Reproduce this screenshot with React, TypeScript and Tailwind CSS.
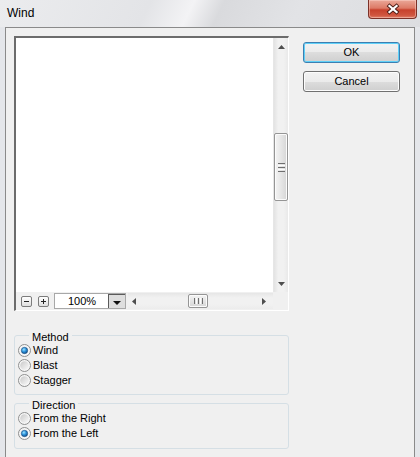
import React from "react";

function Radio({ checked }: { checked: boolean }) {
  return (
    <svg width="13" height="13" viewBox="0 0 13 13" className="shrink-0">
      <defs>
        <linearGradient id="radio-well" x1="0" y1="0" x2="1" y2="1">
          <stop offset="0" stopColor="#c9c9c9" />
          <stop offset="1" stopColor="#fafafa" />
        </linearGradient>
        <radialGradient id="radio-dot" cx="0.4" cy="0.35" r="0.75">
          <stop offset="0" stopColor="#9fe6ff" />
          <stop offset="0.45" stopColor="#2d93dc" />
          <stop offset="1" stopColor="#0b3d73" />
        </radialGradient>
      </defs>
      <circle cx="6.5" cy="6.5" r="6" fill="#f6f6f6" stroke="#8e8f8f" strokeWidth="1" />
      <circle cx="6.5" cy="6.5" r="4.3" fill="url(#radio-well)" />
      {checked && (
        <>
          <circle cx="6.5" cy="6.5" r="4.3" fill="#ffffff" />
          <circle cx="6.5" cy="6.5" r="3.2" fill="url(#radio-dot)" stroke="#1c4e7e" strokeWidth="0.6" />
        </>
      )}
    </svg>
  );
}

function RadioRow({ label, checked }: { label: string; checked: boolean }) {
  return (
    <div className="flex h-[15px] items-center gap-[2px]">
      <Radio checked={checked} />
      <span className="leading-[15px]">{label}</span>
    </div>
  );
}

function Arrow({ dir }: { dir: "up" | "down" | "left" | "right" }) {
  const pts: Record<string, string> = {
    up: "0,4 3.5,0 7,4",
    down: "0,0 7,0 3.5,4",
    left: "4,0 4,7 0,3.5",
    right: "0,0 4,3.5 0,7",
  };
  const vertical = dir === "up" || dir === "down";
  return (
    <svg
      width={vertical ? 7 : 4}
      height={vertical ? 4 : 7}
      viewBox={vertical ? "0 0 7 4" : "0 0 4 7"}
    >
      <polygon points={pts[dir]} fill="#4e4e4e" />
    </svg>
  );
}

function SmallButton({ sign }: { sign: "-" | "+" }) {
  return (
    <div className="flex h-[11px] w-[11px] items-center justify-center rounded-[2px] border border-[#7c7c7c] bg-[linear-gradient(#ffffff,#dedede)]">
      <svg width="7" height="7" viewBox="0 0 7 7">
        <rect x="1" y="3" width="5" height="1" fill="#222" />
        {sign === "+" && <rect x="3" y="1" width="1" height="5" fill="#222" />}
      </svg>
    </div>
  );
}

function DialogButton({ label, focused }: { label: string; focused?: boolean }) {
  return (
    <button
      className={
        focused
          ? "flex h-[21px] w-[97px] items-center justify-center rounded-[3px] border border-[#3c7fb1] bg-[linear-gradient(#f2f2f2_0%,#ebebeb_50%,#dddddd_50%,#cfcfcf_100%)] text-[11px] text-black shadow-[inset_0_0_0_1px_#5fd0f8]"
          : "flex h-[21px] w-[97px] items-center justify-center rounded-[3px] border border-[#707070] bg-[linear-gradient(#f2f2f2_0%,#ebebeb_50%,#dddddd_50%,#cfcfcf_100%)] text-[11px] text-black shadow-[inset_0_0_0_1px_#fcfcfc]"
      }
    >
      {label}
    </button>
  );
}

export default function App() {
  return (
    <div className="flex h-[457px] w-[420px] flex-col overflow-hidden bg-[#e4e6ea] font-['Liberation_Sans',Arial,sans-serif] text-[11px] text-black">
      {/* caption */}
      <div className="flex h-[27px] shrink-0 items-start justify-between bg-[linear-gradient(115deg,#ebecee_0%,#e3e4e7_35%,#f3f3f5_45%,#d9dadd_52%,#e2e3e6_70%,#dcdde0_100%)]">
        <span className="ml-[7px] mt-[6px] text-[12px] leading-[14px]">Wind</span>
        <div className="mr-[3px] flex h-[19px] w-[49px] items-center justify-center rounded-b-[4px] border border-t-0 border-[#7b3128] bg-[linear-gradient(#eaa898_0%,#dd7a66_45%,#c7412c_55%,#d0563f_85%,#e0806a_100%)] shadow-[inset_0_0_0_1px_rgba(255,220,210,0.45)]">
          <svg width="16" height="12" viewBox="0 0 16 12">
            <g strokeLinecap="square">
              <line x1="4.5" y1="3" x2="11.5" y2="9" stroke="#4a1c16" strokeWidth="4" />
              <line x1="11.5" y1="3" x2="4.5" y2="9" stroke="#4a1c16" strokeWidth="4" />
              <line x1="4.5" y1="3" x2="11.5" y2="9" stroke="#ffffff" strokeWidth="2.3" />
              <line x1="11.5" y1="3" x2="4.5" y2="9" stroke="#ffffff" strokeWidth="2.3" />
            </g>
          </svg>
        </div>
      </div>

      <div className="flex flex-1">
        <div className="w-[5px] shrink-0" />
        {/* client area */}
        <div className="flex flex-1 border border-b-0 border-[#8a8a8a] bg-[#f0f0f0] pl-[8px] pt-[8px]">
          {/* left column */}
          <div className="flex w-[275px] shrink-0 flex-col">
            {/* preview */}
            <div className="flex h-[275px] flex-col border-b border-l-2 border-r border-t-2 border-b-white border-l-[#6c6c6c] border-r-white border-t-[#6c6c6c]">
              <div className="flex h-[254px]">
                <div className="flex-1 bg-white" />
                <div className="flex w-[15px] flex-col items-stretch border-l border-[#e6e6e6] bg-[linear-gradient(90deg,#e3e3e3,#f1f1f1_30%,#f1f1f1_70%,#e9e9e9)]">
                  <div className="flex h-[17px] items-center justify-center">
                    <Arrow dir="up" />
                  </div>
                  <div className="mt-[78px] flex h-[68px] items-center justify-center rounded-[2px] border border-[#959595] bg-[linear-gradient(90deg,#f4f4f4,#e6e6e6_50%,#d6d6d6)] shadow-[inset_0_0_0_1px_#fbfbfb]">
                    <div className="flex flex-col gap-[1px]">
                      <div className="h-[1px] w-[7px] bg-[#6f6f6f]" />
                      <div className="h-[1px] w-[7px] bg-[#fdfdfd]" />
                      <div className="h-[1px] w-[7px] bg-[#6f6f6f]" />
                      <div className="h-[1px] w-[7px] bg-[#fdfdfd]" />
                      <div className="h-[1px] w-[7px] bg-[#6f6f6f]" />
                    </div>
                  </div>
                  <div className="flex-1" />
                  <div className="flex h-[17px] items-center justify-center">
                    <Arrow dir="down" />
                  </div>
                </div>
              </div>
              {/* zoom + horizontal scroll */}
              <div className="flex h-[18px] items-center bg-[#f0f0f0] pl-[5px]">
                <SmallButton sign="-" />
                <div className="ml-[6px]">
                  <SmallButton sign="+" />
                </div>
                <div className="ml-[5px] flex h-[16px] w-[72px] border border-[#a8a8a8] bg-white">
                  <div className="flex flex-1 items-center justify-center pl-[1px] leading-[14px]">100%</div>
                  <div className="flex w-[17px] items-end justify-center border-l border-t border-[#5a5a5a] bg-[#dedede] pb-[3px]">
                    <svg width="8" height="4" viewBox="0 0 8 4">
                      <polygon points="0,0 8,0 4,4" fill="#111" />
                    </svg>
                  </div>
                </div>
                <div className="ml-[2px] flex h-[16px] flex-1 items-center bg-[linear-gradient(#e6e6e6,#f1f1f1_30%,#f1f1f1_70%,#ececec)] pr-[7px]">
                  <div className="flex w-[12px] justify-center">
                    <Arrow dir="left" />
                  </div>
                  <div className="ml-[48px] flex h-[14px] w-[20px] items-center justify-center rounded-[2px] border border-[#959595] bg-[linear-gradient(#f4f4f4,#e4e4e4_50%,#d6d6d6)] shadow-[inset_0_0_0_1px_#fbfbfb]">
                    <div className="flex gap-[1px]">
                      <div className="h-[6px] w-[1px] bg-[#6f6f6f]" />
                      <div className="h-[6px] w-[1px] bg-[#fdfdfd]" />
                      <div className="h-[6px] w-[1px] bg-[#6f6f6f]" />
                      <div className="h-[6px] w-[1px] bg-[#fdfdfd]" />
                      <div className="h-[6px] w-[1px] bg-[#6f6f6f]" />
                    </div>
                  </div>
                  <div className="flex-1" />
                  <Arrow dir="right" />
                </div>
                {/* scrollbar corner */}
                <div className="h-full w-[15px] shrink-0 bg-[#f0f0f0]" />
              </div>
            </div>

            {/* method */}
            <fieldset className="mt-[17px] rounded-[3px] border border-[#d5dfe5] pb-[6px] pl-[3px] pt-[1px]">
              <legend className="ml-[11px] px-[3px] pt-[4px] leading-[10px]">Method</legend>
              <RadioRow label="Wind" checked />
              <RadioRow label="Blast" checked={false} />
              <RadioRow label="Stagger" checked={false} />
            </fieldset>

            {/* direction */}
            <fieldset className="mt-[1px] rounded-[3px] border border-[#d5dfe5] pb-[7px] pl-[3px] pt-[1px]">
              <legend className="ml-[11px] px-[3px] pt-[4px] leading-[10px]">Direction</legend>
              <RadioRow label="From the Right" checked={false} />
              <RadioRow label="From the Left" checked />
            </fieldset>
          </div>

          {/* buttons */}
          <div className="ml-[14px] flex flex-col gap-[8px] pt-[6px]">
            <DialogButton label="OK" focused />
            <DialogButton label="Cancel" />
          </div>
        </div>
        <div className="w-[5px] shrink-0" />
      </div>
    </div>
  );
}
